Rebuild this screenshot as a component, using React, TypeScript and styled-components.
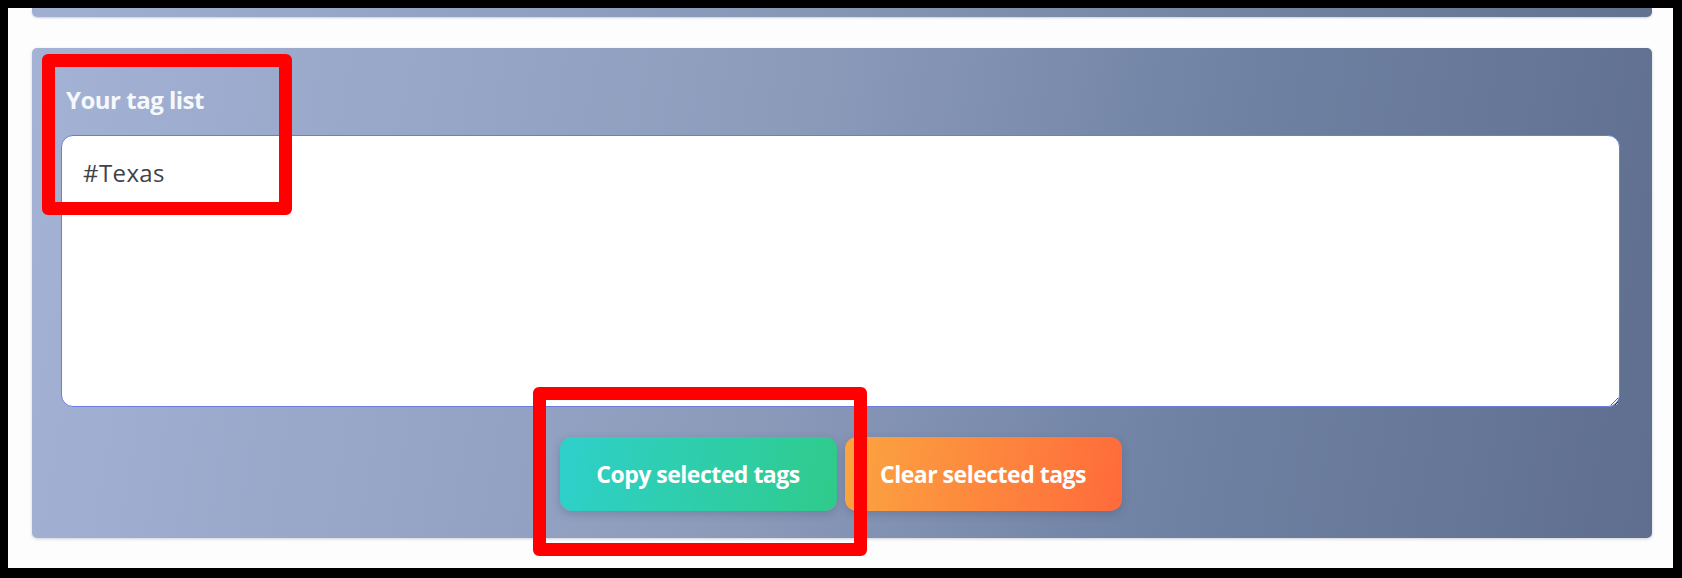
import React, { useEffect, useRef } from 'react';
import styled, { createGlobalStyle } from 'styled-components';

const GlobalStyle = createGlobalStyle`
    html, body {
        margin: 0;
        padding: 0;
        background: #000;
    }
    body {
        font-family: "Open Sans", Lato, sans-serif;
    }
`;

const Frame = styled.div`
    position: relative;
    box-sizing: border-box;
    width: 1682px;
    height: 578px;
    border-style: solid;
    border-color: #000;
    border-width: 8px 9px 10px 8px;
    background: #fdfdfe;
    overflow: hidden;
    padding: 0 21px 0 24px;
    display: flex;
    flex-direction: column;
    gap: 31px;
`;

const PrevPanel = styled.div`
    height: 9px;
    border-radius: 0 0 5px 5px;
    background: linear-gradient(100deg, #a1b0d2 0%, #8795b5 50%, #627190 100%);
    box-shadow: 0 1px 2px rgba(60, 70, 100, 0.25);
`;

const Card = styled.section`
    box-sizing: border-box;
    height: 490px;
    border-radius: 5px;
    background: linear-gradient(100deg, #a3b2d5 0%, #8d9bbb 45%, #7083a4 70%, #5f6e8e 100%);
    box-shadow: 0 1px 3px rgba(60, 70, 100, 0.25);
    padding: 26px 32px 27px 29px;
    display: flex;
    flex-direction: column;
`;

const Label = styled.label`
    margin: 0 0 11px 5px;
    height: 50px;
    display: flex;
    align-items: center;
    font-size: 24px;
    font-weight: 700;
    color: #f6f8fc;
    letter-spacing: -0.5px;
`;

const TagArea = styled.textarea`
    box-sizing: border-box;
    width: 100%;
    height: 272px;
    border: 1px solid #6c7be0;
    border-radius: 12px;
    background: #fff;
    padding: 20px 21px;
    font-family: "Open Sans", sans-serif;
    font-size: 24px;
    letter-spacing: 0.4px;
    color: #3f4348;
    outline: none;
    resize: vertical;
    caret-color: #222;
`;

const ButtonRow = styled.div`
    margin-top: 30px;
    display: flex;
    justify-content: center;
    gap: 8px;
`;

const Button = styled.button<{ tone: 'copy' | 'clear' }>`
    width: 277px;
    height: 74px;
    border: none;
    border-radius: 12px;
    font-family: "Open Sans", Lato, sans-serif;
    font-size: 23px;
    font-weight: 700;
    letter-spacing: -0.5px;
    color: #fff;
    cursor: pointer;
    box-shadow: 0 3px 8px rgba(50, 60, 90, 0.25);
    background: ${p => p.tone === 'copy'
		? 'linear-gradient(100deg, #2ed0cb 0%, #2fcb8b 100%)'
		: 'linear-gradient(100deg, #fba540 0%, #ff6a3b 100%)'};
`;

const Mark = styled.div<{ x: number; y: number; w: number; h: number }>`
    position: absolute;
    left: ${p => p.x}px;
    top: ${p => p.y}px;
    width: ${p => p.w}px;
    height: ${p => p.h}px;
    box-sizing: border-box;
    border: 13px solid #ff0000;
    border-radius: 6px;
    pointer-events: none;
`;

const App: React.FC = () => {
	const areaRef = useRef<HTMLTextAreaElement>(null);

	useEffect(() => {
		const el = areaRef.current;
		if (el) {
			el.focus();
			el.setSelectionRange(el.value.length, el.value.length);
		}
	}, []);

	return (
		<>
			<GlobalStyle />
			<Frame>
				<PrevPanel />
				<Card>
					<Label htmlFor="tags">Your tag list</Label>
					<TagArea id="tags" ref={areaRef} defaultValue="#Texas" />
					<ButtonRow>
						<Button tone="copy">Copy selected tags</Button>
						<Button tone="clear">Clear selected tags</Button>
					</ButtonRow>
				</Card>
				<Mark x={34} y={46} w={250} h={161} />
				<Mark x={525} y={379} w={334} h={169} />
			</Frame>
		</>
	);
};

export default App;
